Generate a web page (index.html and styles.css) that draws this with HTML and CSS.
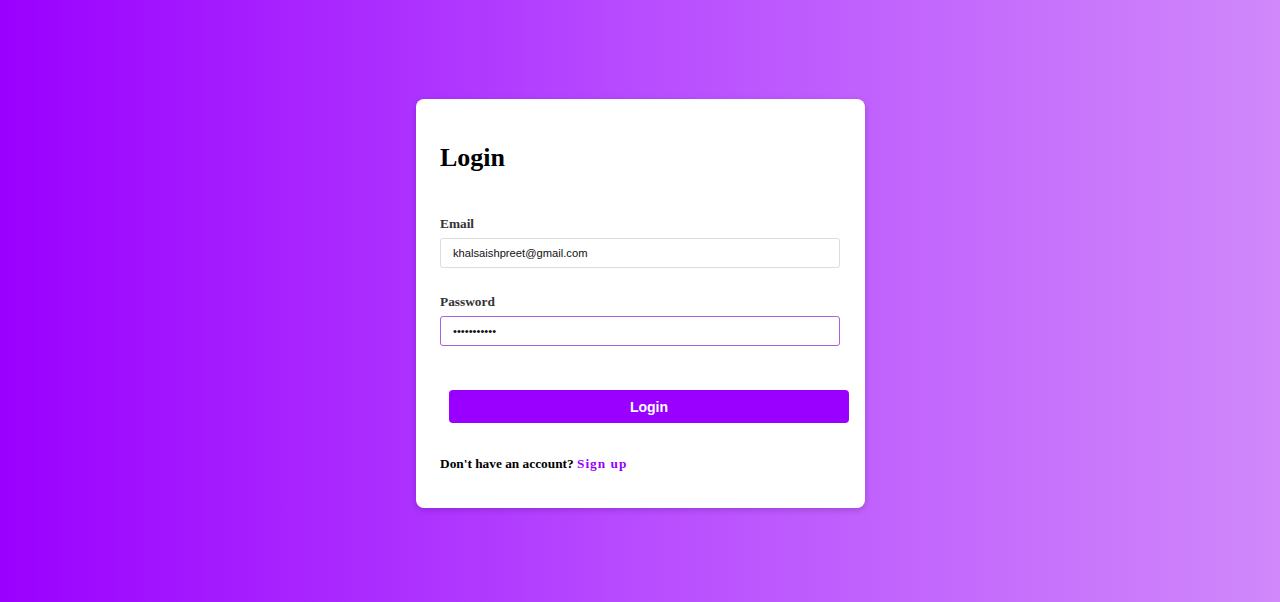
FILE: index.html
```html
<!DOCTYPE html>
<html lang="en">
<head>
<meta charset="utf-8">
<title>Login</title>
<link rel="stylesheet" href="styles.css">
</head>
<body>
<main class="page">
  <form class="card" onsubmit="return false">
    <h2 class="title">Login</h2>
    <div class="field">
      <label class="label" for="email">Email</label>
      <input class="input" id="email" type="email" value="khalsaishpreet@gmail.com">
    </div>
    <div class="field field-pw">
      <label class="label" for="pw">Password</label>
      <input class="input input-focus" id="pw" type="password" value="abcdefghijk">
    </div>
    <button class="btn" type="submit">Login</button>
    <p class="footer">Don't have an account? <a class="link" href="#">Sign up</a></p>
  </form>
</main>
</body>
</html>
```

FILE: styles.css
```css
* { box-sizing: border-box; }
html, body { margin: 0; padding: 0; }
body {
  height: 602px;
  background: linear-gradient(to right, #9a00ff 0%, #b84cff 50%, #d088fa 100%);
  font-family: "Liberation Serif", "Times New Roman", serif;
}
.page {
  height: 100%;
  display: flex;
  align-items: flex-start;
  justify-content: center;
  padding-top: 99px;
  padding-left: 1px;
}
.card {
  width: 449px;
  background: #fff;
  border-radius: 8px;
  padding: 25px 24px 36px 24px;
  box-shadow: 0 2px 6px rgba(60, 0, 100, 0.25);
}
.title {
  margin: 19px 0 0 0;
  font-size: 26px;
  line-height: 30px;
  font-weight: bold;
  color: #000;
}
.field { margin-top: 43px; }
.field-pw { margin-top: 26px; }
.label {
  display: block;
  font-size: 13.33px;
  line-height: 16px;
  font-weight: bold;
  color: #333;
  margin-bottom: 6px;
}
.input {
  display: block;
  width: 400px;
  height: 30px;
  border: 1px solid #dcdcdc;
  border-radius: 3px;
  padding: 0 12px;
  font-family: "Liberation Sans", Arial, sans-serif;
  font-size: 11.2px;
  color: #111;
  outline: none;
  background: #fff;
}
.input-focus { border-color: #a95fe0; }
.btn {
  display: block;
  width: 400px;
  height: 33px;
  margin: 44px 0 0 9px;
  border: none;
  border-radius: 4px;
  background: #9900ff;
  color: #fff;
  font-family: "Liberation Sans", Arial, sans-serif;
  font-size: 14px;
  font-weight: bold;
  cursor: pointer;
}
.footer {
  margin: 33px 0 0 0;
  font-size: 13.33px;
  line-height: 16px;
  font-weight: bold;
  color: #000;
}
.link {
  color: #9900ff;
  text-decoration: none;
  letter-spacing: 1px;
}
```
